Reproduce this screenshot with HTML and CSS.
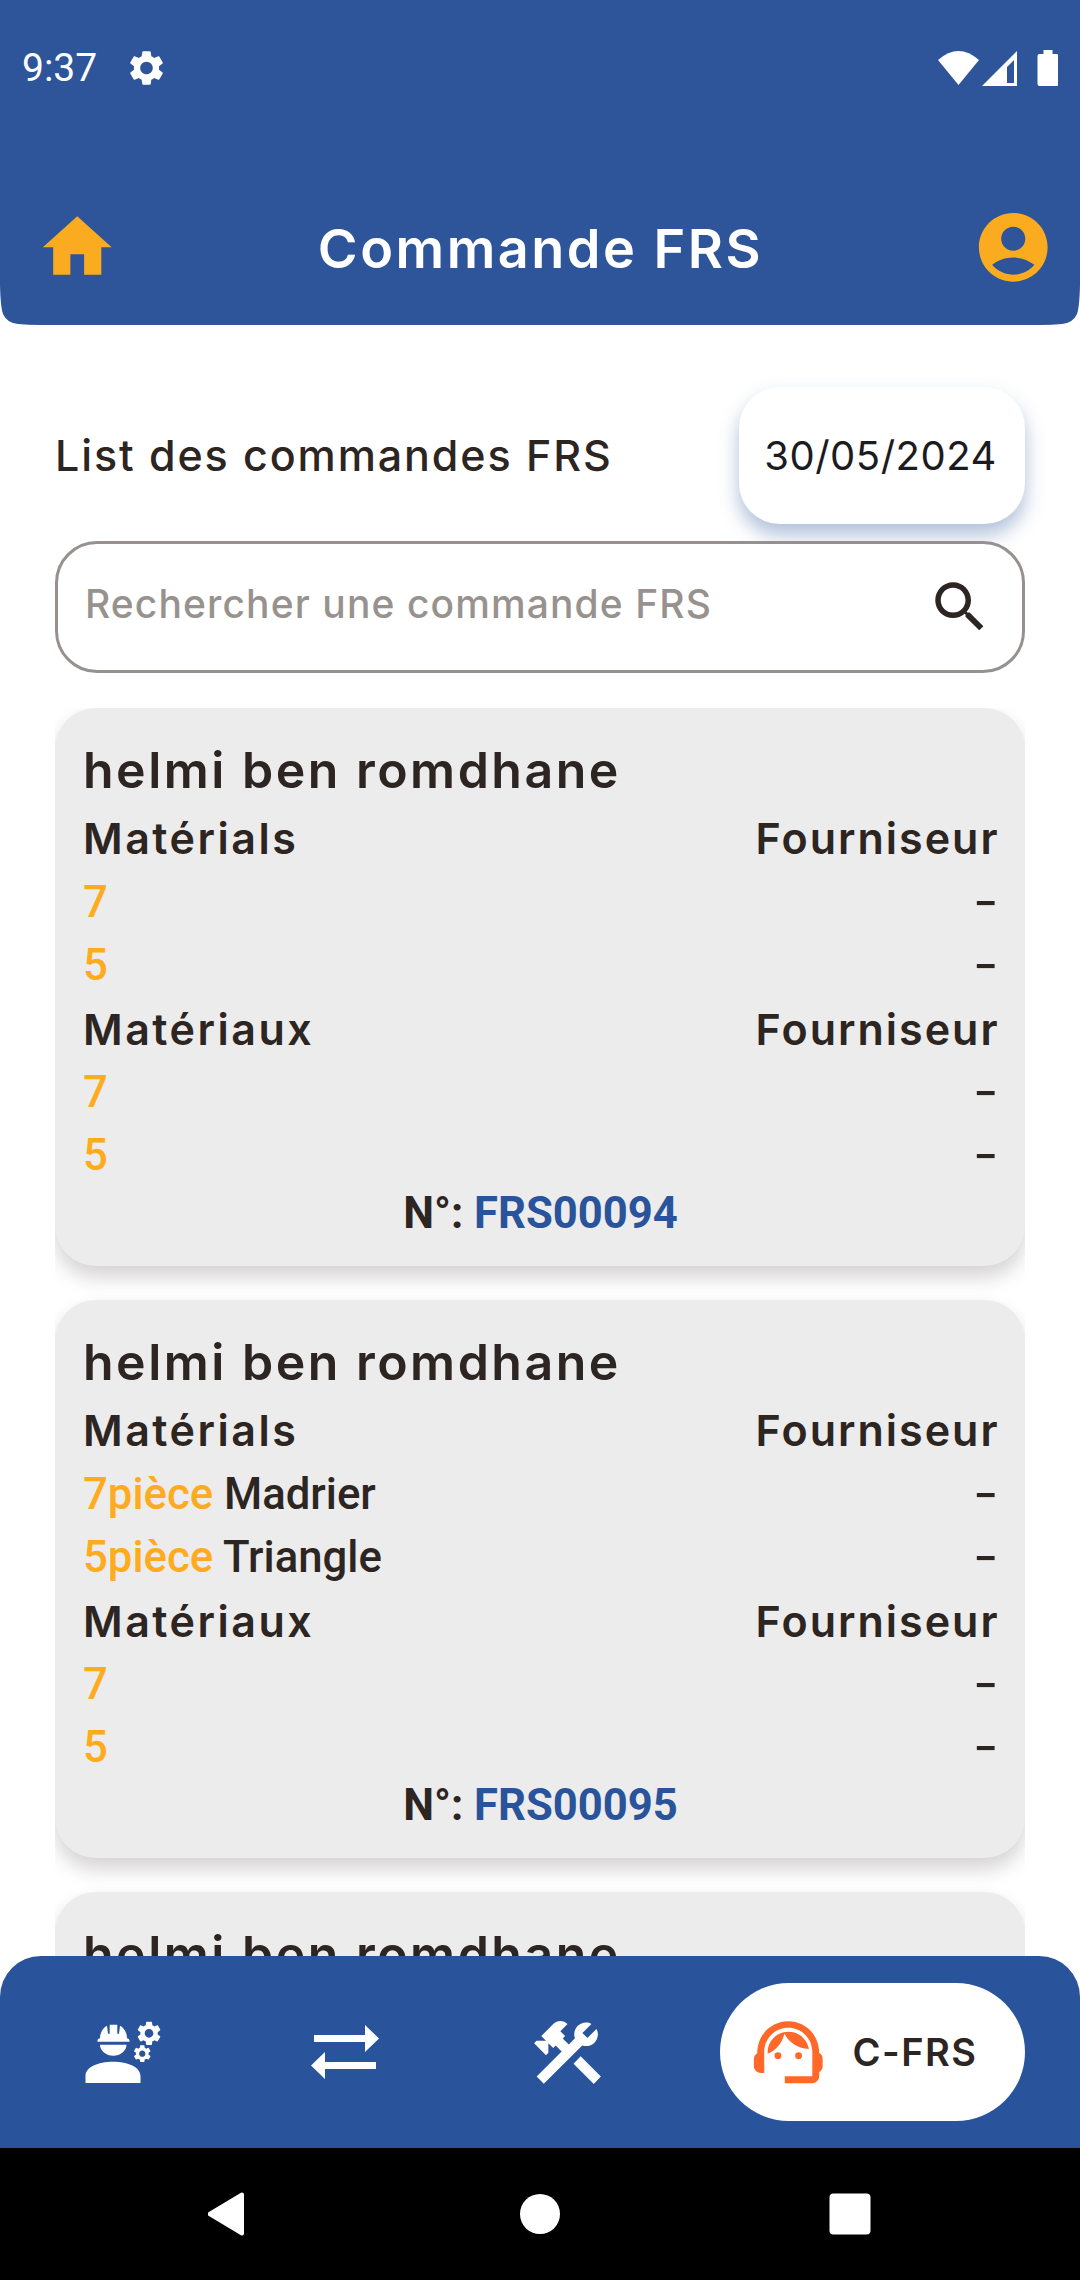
FILE: index.html
```html
<!DOCTYPE html>
<html lang="fr">
<head>
<meta charset="utf-8">
<title>Commande FRS</title>
<link rel="stylesheet" href="styles.css">
</head>
<body>
<div class="screen">
  <header class="header">
    <div class="status">
      <span class="clock">9:37</span>
      <svg class="gear" viewBox="2 2 20 20"><path id="cog" d="M19.14 12.94c.04-.3.06-.61.06-.94 0-.32-.02-.64-.07-.94l2.03-1.58c.18-.14.23-.41.12-.61l-1.92-3.32c-.12-.22-.37-.29-.59-.22l-2.39.96c-.5-.38-1.03-.7-1.62-.94l-.36-2.54c-.04-.24-.24-.41-.48-.41h-3.84c-.24 0-.43.17-.47.41l-.36 2.54c-.59.24-1.13.57-1.62.94l-2.39-.96c-.22-.08-.47 0-.59.22L2.74 8.87c-.12.21-.08.47.12.61l2.03 1.58c-.05.3-.09.63-.09.94s.02.64.07.94l-2.03 1.58c-.18.14-.23.41-.12.61l1.92 3.32c.12.22.37.29.59.22l2.39-.96c.5.38 1.03.7 1.62.94l.36 2.54c.05.24.24.41.48.41h3.84c.24 0 .44-.17.47-.41l.36-2.54c.59-.24 1.13-.56 1.62-.94l2.39.96c.22.08.47 0 .59-.22l1.92-3.32c.12-.22.07-.47-.12-.61l-2.01-1.58zM12 15.6c-1.98 0-3.6-1.62-3.6-3.6s1.62-3.6 3.6-3.6 3.6 1.62 3.6 3.6-1.62 3.6-3.6 3.6z"/></svg>
      <svg class="signals" viewBox="0 0 120 36"><path d="M0 10Q20.500-8 41 10L20.500 35z"/><path fill-rule="evenodd" d="M79 1v35H44zM76 10l-7 7v16h7z"/><path d="M105.500 0h9v4h4q2 0 2 2v28q0 2-2 2h-17q-2 0-2-2V6q0-2 2-2h4z"/></svg>
    </div>
    <div class="appbar">
      <svg class="icon" viewBox="0 0 24 24"><path d="M10 20v-6h4v6h5v-8h3L12 3 2 12h3v8z"/></svg>
      <h1 class="title">Commande FRS</h1>
      <svg class="icon" viewBox="0 0 24 24"><path d="M12 2C6.480 2 2 6.480 2 12s4.480 10 10 10 10-4.480 10-10S17.520 2 12 2zm0 4c1.930 0 3.500 1.570 3.500 3.500S13.930 13 12 13s-3.500-1.570-3.500-3.500S10.070 6 12 6zm0 14c-2.030 0-4.430-.82-6.140-2.880C7.550 15.800 9.680 15 12 15s4.450.8 6.140 2.120C16.430 19.180 14.030 20 12 20z"/></svg>
    </div>
  </header>

  <main class="content">
    <div class="heading">
      <h2 class="subtitle">List des commandes FRS</h2>
      <div class="date">30/05/2024</div>
    </div>
    <div class="search">
      <span class="placeholder">Rechercher une commande FRS</span>
      <svg class="icon-search" viewBox="0 0 24 24"><path d="M15.500 14h-.79l-.28-.27C15.410 12.590 16 11.110 16 9.500 16 5.910 13.090 3 9.500 3S3 5.910 3 9.500 5.910 16 9.500 16c1.610 0 3.090-.59 4.230-1.570l.27.28v.79l5 4.990L20.490 19l-4.990-5zm-6 0C7.010 14 5 11.990 5 9.500S7.010 5 9.500 5 14 7.010 14 9.500 11.990 14 9.500 14z"/></svg>
    </div>
    <div class="list">
      <article class="card">
        <h3 class="name">helmi ben romdhane</h3>
        <div class="row head"><span class="left">Matérials</span><span class="right">Fourniseur</span></div>
        <div class="row"><span class="qty">7</span><span class="dash">-</span></div>
        <div class="row"><span class="qty">5</span><span class="dash">-</span></div>
        <div class="row head"><span class="left">Matériaux</span><span class="right">Fourniseur</span></div>
        <div class="row"><span class="qty">7</span><span class="dash">-</span></div>
        <div class="row"><span class="qty">5</span><span class="dash">-</span></div>
        <p class="number">N°: <span class="ref">FRS00094</span></p>
      </article>
      <article class="card">
        <h3 class="name">helmi ben romdhane</h3>
        <div class="row head"><span class="left">Matérials</span><span class="right">Fourniseur</span></div>
        <div class="row"><span><span class="qty">7pièce</span> Madrier</span><span class="dash">-</span></div>
        <div class="row"><span><span class="qty">5pièce</span> Triangle</span><span class="dash">-</span></div>
        <div class="row head"><span class="left">Matériaux</span><span class="right">Fourniseur</span></div>
        <div class="row"><span class="qty">7</span><span class="dash">-</span></div>
        <div class="row"><span class="qty">5</span><span class="dash">-</span></div>
        <p class="number">N°: <span class="ref">FRS00095</span></p>
      </article>
      <article class="card">
        <h3 class="name">helmi ben romdhane</h3>
      </article>
    </div>
  </main>

  <nav class="tabs">
    <svg class="tab worker" viewBox="0 0 76 62"><path d="M.5 62V55C.5 46 13 40.700 28 40.700s27.500 5.300 27.500 14.300v7zM15 23.800h26.500c0 6-6 11-13.200 11S15 29.800 15 23.800zM12.500 20.700Q12 17.500 15 17.300C15 12 18 6.500 22 4.700L23 12.700h1.700V3.700h7.600V12.700h1.700L35 4.700C39 6.500 42 12 42 17.300Q45 17.500 44.500 20.700z"/><use href="#cog" transform="translate(49.500 -2.200) scale(1.210)"/><use href="#cog" transform="translate(46.700 22.100) scale(.88)"/></svg>
    <svg class="tab arrows" viewBox="0 0 68 54"><path d="M3 10h51V0l14 13.500L54 27V17H3zM65 37v7H14v10L0 40.500 14 27v10z"/></svg>
    <svg class="tab tools" viewBox="0 0 24 24"><path d="M13.780 15.300l6 6 2.110-2.160-6-6zM17.500 10.100c-.39 0-.81-.05-1.140-.19L4.970 21.250l-2.110-2.110 7.410-7.400L8.500 9.960l-.72.7-1.450-1.410v2.860l-.7.7L2.110 9.250l.7-.7h2.810L4.220 7.140l3.560-3.560C8.950 2.410 10.830 2.410 12 3.580L9.890 5.740l1.410 1.400-.71.710 1.790 1.780 1.820-1.880C14.060 7.420 14 7 14 6.630c0-1.970 1.560-3.520 3.500-3.520.59 0 1.110.14 1.580.42L16.410 6.200l1.500 1.500 2.670-2.670c.28.47.42.97.42 1.600 0 1.920-1.550 3.470-3.500 3.470z"/></svg>
    <div class="tab-active">
      <svg class="agent" viewBox="0 0 24 24"><path d="M21 12.220C21 6.730 16.740 3 12 3c-4.690 0-9 3.650-9 9.280-.6.340-1 .980-1 1.720v2c0 1.100.9 2 2 2h1v-6.100c0-3.870 3.130-7 7-7s7 3.130 7 7V19h-8v2h8c1.100 0 2-.9 2-2v-1.220c.59-.310 1-.920 1-1.640v-2.300c0-.7-.410-1.310-1-1.620z"/><circle cx="9" cy="13" r="1"/><circle cx="15" cy="13" r="1"/><path d="M18 11.030C17.520 8.180 15.040 6 12.050 6c-3.030 0-6.290 2.510-6.030 6.450 2.470-1.010 4.330-3.210 4.860-5.890 1.310 2.630 4 4.440 7.120 4.470z"/></svg>
      <span>C-FRS</span>
    </div>
  </nav>
  <div class="system">
    <svg class="sys" viewBox="0 0 44 44"><path d="M34 2.500L1.500 22 34 41.500z" stroke="#fff" stroke-width="4" stroke-linejoin="round"/></svg>
    <svg class="sys" viewBox="0 0 44 44"><circle cx="22" cy="22" r="20"/></svg>
    <svg class="sys" viewBox="0 0 44 44"><rect x="1.500" y="1.500" width="41" height="41" rx="4"/></svg>
  </div>
</div>
</body>
</html>
```

FILE: styles.css
```css
* { box-sizing: border-box; margin: 0; }
body { background: #fff; color: #2d2522; font-family: Inter, "Noto Sans", sans-serif; }
svg { display: block; fill: currentColor; flex: none; }
.screen { width: 1080px; height: 2280px; display: flex; flex-direction: column; overflow: hidden; }

.header { height: 325px; flex: none; background: #2e549a; color: #fff; clip-path: path("M0 0H1080V285Q1079.500 307 1077 314Q1073 323 1062 324Q1052 325 1040 325H40Q28 325 18 324Q7 323 3 314Q.5 307 0 285Z"); }
.status { display: flex; align-items: center; height: 136px; padding: 0 22px; }
.clock { font: 400 39px Roboto, sans-serif; width: 107px; }
.gear { width: 35px; height: 36px; }
.signals { width: 120px; height: 36px; margin-left: auto; }
.appbar { display: flex; align-items: center; justify-content: space-between; height: 223px; padding: 0 25px 0 36px; }
.icon { width: 82.500px; height: 82.500px; color: #fbab20; }
.title { font-size: 54px; font-weight: 600; line-height: 60px; letter-spacing: 2.500px; padding-top: 3px; margin-left: -10px; white-space: nowrap; }

.content { flex: 1; min-height: 0; padding: 62px 55px 0; display: flex; flex-direction: column; overflow: hidden; }
.heading { display: flex; justify-content: space-between; align-items: center; height: 137px; flex: none; }
.subtitle { font-size: 43px; font-weight: 500; letter-spacing: 1.900px; padding-bottom: 2px; white-space: nowrap; }
.date { width: 286px; height: 137px; border-radius: 41px; display: flex; align-items: center; justify-content: center; font-size: 40px; letter-spacing: .5px; padding-right: 3px; color: #1c1b1f; box-shadow: 0 11px 19px rgba(41, 84, 155, .37); }
.search { flex: none; height: 132px; margin-top: 17px; border: 3px solid #96918f; border-radius: 42px; background: #fff; position: relative; display: flex; align-items: center; justify-content: space-between; padding: 0 29px 0 27px; }
.placeholder { font-size: 39px; font-weight: 500; letter-spacing: 1.100px; padding-bottom: 7px; color: #98928f; white-space: nowrap; }
.icon-search { width: 66px; height: 66px; }

.list { flex: 1; min-height: 0; margin-top: 35px; display: flex; flex-direction: column; gap: 34px; overflow: hidden; }
.card { flex: none; height: 558px; border-radius: 41px; background: #ececec; padding: 27px 27px 29px 28px; box-shadow: 0 11px 19px rgba(45, 37, 34, .2); }
.name { font-size: 50px; font-weight: 600; line-height: 70px; letter-spacing: 2.500px; white-space: nowrap; }
.row { display: flex; justify-content: space-between; align-items: center; height: 63px; font: 500 43.700px/63px Roboto, sans-serif; }
.head { font: 600 43px/62px Inter, sans-serif; height: 64px; }
.name + .head { height: 66px; }
.left { letter-spacing: 2.500px; }
.right { letter-spacing: 2px; margin-right: -1.500px; }
.qty { color: #feab20; }
.dash { font: 500 44px/59px Inter, sans-serif; padding-bottom: 3px; margin-right: 1px; transform: scaleX(1.250); transform-origin: 80% 50%; }
.number { text-align: center; font: 700 43.600px/53px Roboto, sans-serif; }
.ref { color: #29549b; }

.tabs { flex: none; height: 192px; background: #29549b; border-radius: 41px 41px 0 0; color: #fff; display: flex; align-items: center; padding: 0 55px 0 85px; }
.worker { width: 76px; height: 62px; overflow: visible; }
.arrows { width: 68px; height: 54px; margin-left: 150px; }
.tools { width: 81px; height: 81px; margin-left: 148px; }
.tab-active { margin-left: auto; width: 305px; height: 138px; border-radius: 69px; background: #fff; color: #2d2522; display: flex; align-items: center; padding-left: 27px; gap: 23px; font-size: 38px; font-weight: 600; letter-spacing: 1.500px; }
.agent { width: 82.500px; height: 82.500px; color: #ff6829; }
.system { flex: none; height: 132px; background: #000; color: #fff; display: flex; align-items: center; justify-content: center; gap: 266px; }
.sys { width: 44px; height: 44px; }
```
